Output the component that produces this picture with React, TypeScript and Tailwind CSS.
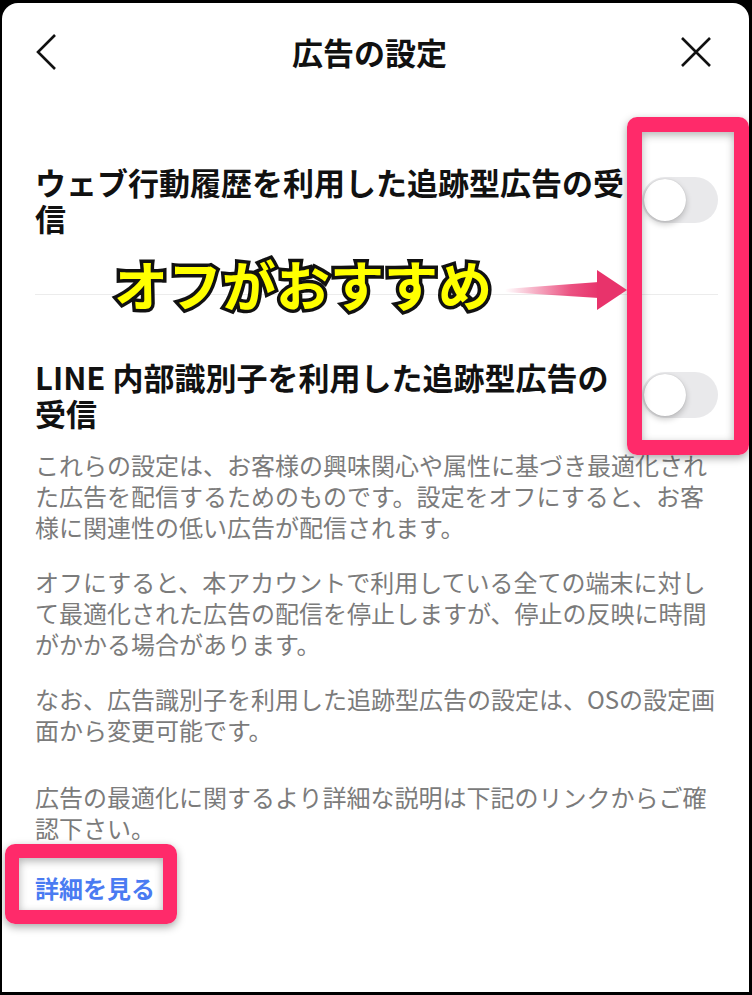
import React from 'react';

const jp = "font-['Noto_Sans_CJK_JP','Noto_Sans',sans-serif]";

// iOS-style switch, always off here
const Toggle = () => (
  <div className="relative h-[46px] w-[76px] shrink-0 rounded-full bg-[#e9e9eb]">
    <div className="absolute left-[2px] top-[2px] h-[42px] w-[42px] rounded-full bg-white shadow-[0_3px_6px_rgba(0,0,0,0.22),0_0_1px_rgba(0,0,0,0.2)]" />
  </div>
);

const SettingRow = ({ label }: { label: string }) => (
  <div className="flex items-center justify-between">
    <p className="w-[598px] text-[31px] font-bold leading-[36px] text-[#111]">{label}</p>
    <Toggle />
  </div>
);

const paragraphs = [
  'これらの設定は、お客様の興味関心や属性に基づき最適化された広告を配信するためのものです。設定をオフにすると、お客様に関連性の低い広告が配信されます。',
  'オフにすると、本アカウントで利用している全ての端末に対して最適化された広告の配信を停止しますが、停止の反映に時間がかかる場合があります。',
  'なお、広告識別子を利用した追跡型広告の設定は、OSの設定画面から変更可能です。',
];

export default function App() {
  return (
    <div className={`h-[995px] w-[752px] bg-black pb-[3px] pl-[2px] pr-[3px] pt-[3px] ${jp}`}>
      <div className="relative h-full overflow-hidden rounded-t-[16px] bg-white">
        {/* header */}
        <div className="flex h-[98px] items-center justify-between pl-[33px] pr-[37px]">
          <svg width="24" height="38" viewBox="0 0 24 38" fill="none" stroke="#111" strokeWidth="2.6">
            <path d="M20 2 L3 19 L20 36" />
          </svg>
          <h1 className="text-[31px] font-bold text-[#111]">広告の設定</h1>
          <svg width="32" height="32" viewBox="0 0 32 32" fill="none" stroke="#111" strokeWidth="2.6">
            <path d="M2 2 L30 30 M30 2 L2 30" />
          </svg>
        </div>

        <div className="pl-[33px] pr-[31px]">
          <div className="pb-[58px] pt-[63px]">
            <SettingRow label="ウェブ行動履歴を利用した追跡型広告の受信" />
          </div>
          <div className="h-px bg-[#ececec]" />
          <div className="pt-[64px]">
            <SettingRow label="LINE 内部識別子を利用した追跡型広告の受信" />
          </div>

          <div className="mt-[18px] text-[24px] leading-[31px] text-[#7b7b7b]">
            <div className="flex flex-col gap-[24px]">
              {paragraphs.map((p, i) => (
                <p key={i}>{p}</p>
              ))}
            </div>
            <p className="mt-[36px]">広告の最適化に関するより詳細な説明は下記のリンクからご確認下さい。</p>
          </div>

          <a className="mt-[29px] block text-[24px] font-semibold leading-[31px] text-[#4a7bf2]">詳細を見る</a>
        </div>

        {/* annotations */}
        <div className="absolute left-[625px] top-[114px] h-[338px] w-[122px] rounded-[10px] border-[15px] border-[#ff2a6a] shadow-[0_3px_8px_rgba(0,0,0,0.35),inset_0_3px_8px_rgba(0,0,0,0.3)]" />
        <div className="absolute left-[3px] top-[841px] h-[80px] w-[172px] rounded-[10px] border-[14px] border-[#ff2a6a] shadow-[0_3px_8px_rgba(0,0,0,0.35),inset_0_3px_8px_rgba(0,0,0,0.3)]" />

        <p className="absolute left-[112px] top-[250px] text-[54px] font-bold leading-[62px] text-[#ffff00] [-webkit-text-stroke:7px_#111] [paint-order:stroke_fill]">
          オフがおすすめ
        </p>
        <svg className="absolute left-[503px] top-[265px]" width="124" height="44" viewBox="0 0 124 44">
          <defs>
            <linearGradient id="arrowFade" x1="0" x2="1" y1="0" y2="0">
              <stop offset="0" stopColor="#e8336b" stopOpacity="0" />
              <stop offset="0.7" stopColor="#e8336b" stopOpacity="0.85" />
              <stop offset="1" stopColor="#e8336b" />
            </linearGradient>
          </defs>
          <polygon points="0,21 94,14 94,30 0,24" fill="url(#arrowFade)" />
          <polygon points="92,2 122,22 92,42" fill="#e8336b" />
        </svg>
      </div>
    </div>
  );
}
